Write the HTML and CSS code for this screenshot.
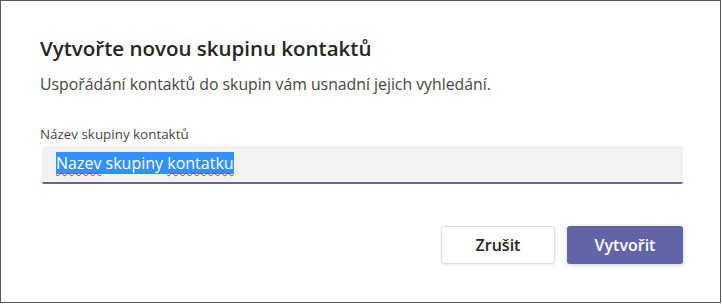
FILE: index.html
```html
<!DOCTYPE html>
<html lang="cs">
<head>
<meta charset="utf-8">
<link rel="stylesheet" href="styles.css">
</head>
<body>
<div class="dialog">
  <h1 class="title">Vytvořte novou skupinu kontaktů</h1>
  <p class="subtitle">Uspořádání kontaktů do skupin vám usnadní jejich vyhledání.</p>
  <div class="field">
    <label class="label">Název skupiny kontaktů</label>
    <div class="input"><span class="sel"><span class="typo">Nazev</span> skupiny <span class="typo">kontatku</span></span></div>
  </div>
  <div class="actions">
    <button class="btn btn-secondary">Zrušit</button>
    <button class="btn btn-primary">Vytvořit</button>
  </div>
</div>
</body>
</html>
```
FILE: styles.css
```css
html, body {
  margin: 0;
  padding: 0;
  background: #ffffff;
}
.dialog {
  box-sizing: border-box;
  width: 721px;
  height: 303px;
  border: 1px solid #5a5a5a;
  background: #ffffff;
  padding: 33px 37px 0 39px;
  font-family: "Open Sans", "Noto Sans", sans-serif;
  color: #252423;
}
.title {
  margin: 0;
  font-size: 20.5px;
  font-weight: 600;
  line-height: 28px;
  color: #252423;
}
.subtitle {
  margin: 11px 0 0 0;
  font-size: 15.8px;
  line-height: 22px;
  color: #484644;
}
.field {
  margin-top: 30px;
  padding-left: 2px;
}
.label {
  display: block;
  margin-left: -2px;
  font-size: 13.4px;
  line-height: 18px;
  color: #484644;
}
.input {
  box-sizing: border-box;
  margin-top: 3px;
  height: 38px;
  background: #f3f2f1;
  border-bottom: 2px solid #6264a7;
  border-radius: 3px 3px 2px 2px;
  padding: 6px 0 0 14px;
  font-size: 16px;
  line-height: 22px;
}
.sel {
  background: #3390ff;
  color: #ffffff;
}
.typo {
  text-decoration: underline wavy #e81123;
  text-decoration-thickness: 1px;
  text-underline-offset: 3px;
}
.actions {
  margin-top: 42px;
  display: flex;
  justify-content: flex-end;
  gap: 12px;
}
.btn {
  box-sizing: border-box;
  width: 114px;
  height: 38px;
  border-radius: 3px;
  font-family: "Open Sans", "Noto Sans", sans-serif;
  font-size: 16px;
  font-weight: 600;
  cursor: pointer;
}
.btn-secondary {
  background: #ffffff;
  border: 1px solid #e1dfdd;
  color: #252423;
  box-shadow: 0 1px 3px rgba(0,0,0,0.08);
}
.btn-primary {
  width: 116px;
  background: #6264a7;
  border: none;
  color: #ffffff;
  box-shadow: 0 1px 4px rgba(0,0,0,0.2);
}
```
